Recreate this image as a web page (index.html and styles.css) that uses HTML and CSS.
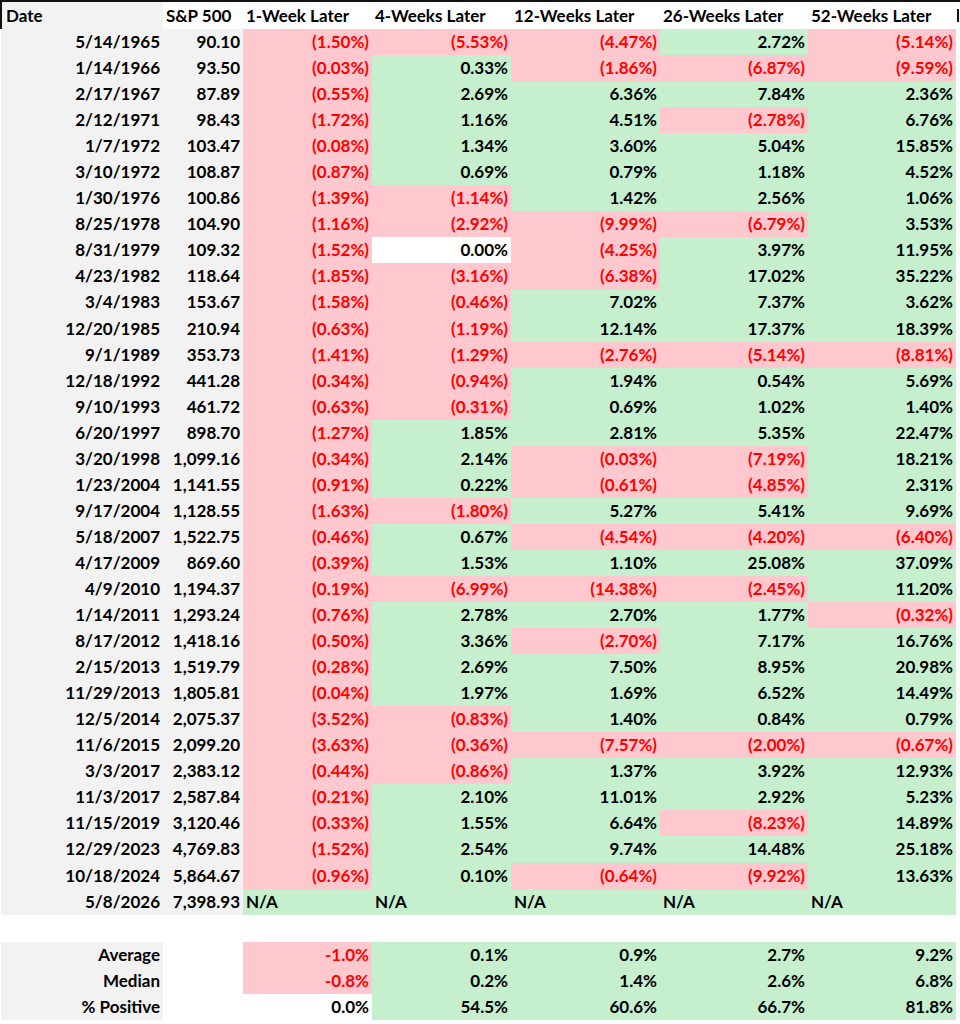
FILE: index.html
```html
<!DOCTYPE html>
<html>
<head>
<meta charset="utf-8">
<link rel="stylesheet" href="styles.css">
</head>
<body>
<table class="sheet">
<colgroup>
<col class="c-date"><col class="c-spx"><col class="c-w1"><col class="c-w4"><col class="c-w12"><col class="c-w26"><col class="c-w52"><col class="c-extra">
</colgroup>
<thead>
<tr class="head">
<th class="h-date">Date</th><th>S&amp;P 500</th><th>1-Week Later</th><th>4-Weeks Later</th><th>12-Weeks Later</th><th>26-Weeks Later</th><th>52-Weeks Later</th><th class="h-extra"><span class="stub"></span></th>
</tr>
</thead>
<tbody>
<tr><td class="lbl">5/14/1965</td><td class="lbl">90.10</td><td class="neg">(1.50%)</td><td class="neg">(5.53%)</td><td class="neg">(4.47%)</td><td class="pos">2.72%</td><td class="neg">(5.14%)</td><td></td></tr>
<tr><td class="lbl">1/14/1966</td><td class="lbl">93.50</td><td class="neg">(0.03%)</td><td class="pos">0.33%</td><td class="neg">(1.86%)</td><td class="neg">(6.87%)</td><td class="neg">(9.59%)</td><td></td></tr>
<tr><td class="lbl">2/17/1967</td><td class="lbl">87.89</td><td class="neg">(0.55%)</td><td class="pos">2.69%</td><td class="pos">6.36%</td><td class="pos">7.84%</td><td class="pos">2.36%</td><td></td></tr>
<tr><td class="lbl">2/12/1971</td><td class="lbl">98.43</td><td class="neg">(1.72%)</td><td class="pos">1.16%</td><td class="pos">4.51%</td><td class="neg">(2.78%)</td><td class="pos">6.76%</td><td></td></tr>
<tr><td class="lbl">1/7/1972</td><td class="lbl">103.47</td><td class="neg">(0.08%)</td><td class="pos">1.34%</td><td class="pos">3.60%</td><td class="pos">5.04%</td><td class="pos">15.85%</td><td></td></tr>
<tr><td class="lbl">3/10/1972</td><td class="lbl">108.87</td><td class="neg">(0.87%)</td><td class="pos">0.69%</td><td class="pos">0.79%</td><td class="pos">1.18%</td><td class="pos">4.52%</td><td></td></tr>
<tr><td class="lbl">1/30/1976</td><td class="lbl">100.86</td><td class="neg">(1.39%)</td><td class="neg">(1.14%)</td><td class="pos">1.42%</td><td class="pos">2.56%</td><td class="pos">1.06%</td><td></td></tr>
<tr><td class="lbl">8/25/1978</td><td class="lbl">104.90</td><td class="neg">(1.16%)</td><td class="neg">(2.92%)</td><td class="neg">(9.99%)</td><td class="neg">(6.79%)</td><td class="pos">3.53%</td><td></td></tr>
<tr><td class="lbl">8/31/1979</td><td class="lbl">109.32</td><td class="neg">(1.52%)</td><td class="zero">0.00%</td><td class="neg">(4.25%)</td><td class="pos">3.97%</td><td class="pos">11.95%</td><td></td></tr>
<tr><td class="lbl">4/23/1982</td><td class="lbl">118.64</td><td class="neg">(1.85%)</td><td class="neg">(3.16%)</td><td class="neg">(6.38%)</td><td class="pos">17.02%</td><td class="pos">35.22%</td><td></td></tr>
<tr><td class="lbl">3/4/1983</td><td class="lbl">153.67</td><td class="neg">(1.58%)</td><td class="neg">(0.46%)</td><td class="pos">7.02%</td><td class="pos">7.37%</td><td class="pos">3.62%</td><td></td></tr>
<tr><td class="lbl">12/20/1985</td><td class="lbl">210.94</td><td class="neg">(0.63%)</td><td class="neg">(1.19%)</td><td class="pos">12.14%</td><td class="pos">17.37%</td><td class="pos">18.39%</td><td></td></tr>
<tr><td class="lbl">9/1/1989</td><td class="lbl">353.73</td><td class="neg">(1.41%)</td><td class="neg">(1.29%)</td><td class="neg">(2.76%)</td><td class="neg">(5.14%)</td><td class="neg">(8.81%)</td><td></td></tr>
<tr><td class="lbl">12/18/1992</td><td class="lbl">441.28</td><td class="neg">(0.34%)</td><td class="neg">(0.94%)</td><td class="pos">1.94%</td><td class="pos">0.54%</td><td class="pos">5.69%</td><td></td></tr>
<tr><td class="lbl">9/10/1993</td><td class="lbl">461.72</td><td class="neg">(0.63%)</td><td class="neg">(0.31%)</td><td class="pos">0.69%</td><td class="pos">1.02%</td><td class="pos">1.40%</td><td></td></tr>
<tr><td class="lbl">6/20/1997</td><td class="lbl">898.70</td><td class="neg">(1.27%)</td><td class="pos">1.85%</td><td class="pos">2.81%</td><td class="pos">5.35%</td><td class="pos">22.47%</td><td></td></tr>
<tr><td class="lbl">3/20/1998</td><td class="lbl">1,099.16</td><td class="neg">(0.34%)</td><td class="pos">2.14%</td><td class="neg">(0.03%)</td><td class="neg">(7.19%)</td><td class="pos">18.21%</td><td></td></tr>
<tr><td class="lbl">1/23/2004</td><td class="lbl">1,141.55</td><td class="neg">(0.91%)</td><td class="pos">0.22%</td><td class="neg">(0.61%)</td><td class="neg">(4.85%)</td><td class="pos">2.31%</td><td></td></tr>
<tr><td class="lbl">9/17/2004</td><td class="lbl">1,128.55</td><td class="neg">(1.63%)</td><td class="neg">(1.80%)</td><td class="pos">5.27%</td><td class="pos">5.41%</td><td class="pos">9.69%</td><td></td></tr>
<tr><td class="lbl">5/18/2007</td><td class="lbl">1,522.75</td><td class="neg">(0.46%)</td><td class="pos">0.67%</td><td class="neg">(4.54%)</td><td class="neg">(4.20%)</td><td class="neg">(6.40%)</td><td></td></tr>
<tr><td class="lbl">4/17/2009</td><td class="lbl">869.60</td><td class="neg">(0.39%)</td><td class="pos">1.53%</td><td class="pos">1.10%</td><td class="pos">25.08%</td><td class="pos">37.09%</td><td></td></tr>
<tr><td class="lbl">4/9/2010</td><td class="lbl">1,194.37</td><td class="neg">(0.19%)</td><td class="neg">(6.99%)</td><td class="neg">(14.38%)</td><td class="neg">(2.45%)</td><td class="pos">11.20%</td><td></td></tr>
<tr><td class="lbl">1/14/2011</td><td class="lbl">1,293.24</td><td class="neg">(0.76%)</td><td class="pos">2.78%</td><td class="pos">2.70%</td><td class="pos">1.77%</td><td class="neg">(0.32%)</td><td></td></tr>
<tr><td class="lbl">8/17/2012</td><td class="lbl">1,418.16</td><td class="neg">(0.50%)</td><td class="pos">3.36%</td><td class="neg">(2.70%)</td><td class="pos">7.17%</td><td class="pos">16.76%</td><td></td></tr>
<tr><td class="lbl">2/15/2013</td><td class="lbl">1,519.79</td><td class="neg">(0.28%)</td><td class="pos">2.69%</td><td class="pos">7.50%</td><td class="pos">8.95%</td><td class="pos">20.98%</td><td></td></tr>
<tr><td class="lbl">11/29/2013</td><td class="lbl">1,805.81</td><td class="neg">(0.04%)</td><td class="pos">1.97%</td><td class="pos">1.69%</td><td class="pos">6.52%</td><td class="pos">14.49%</td><td></td></tr>
<tr><td class="lbl">12/5/2014</td><td class="lbl">2,075.37</td><td class="neg">(3.52%)</td><td class="neg">(0.83%)</td><td class="pos">1.40%</td><td class="pos">0.84%</td><td class="pos">0.79%</td><td></td></tr>
<tr><td class="lbl">11/6/2015</td><td class="lbl">2,099.20</td><td class="neg">(3.63%)</td><td class="neg">(0.36%)</td><td class="neg">(7.57%)</td><td class="neg">(2.00%)</td><td class="neg">(0.67%)</td><td></td></tr>
<tr><td class="lbl">3/3/2017</td><td class="lbl">2,383.12</td><td class="neg">(0.44%)</td><td class="neg">(0.86%)</td><td class="pos">1.37%</td><td class="pos">3.92%</td><td class="pos">12.93%</td><td></td></tr>
<tr><td class="lbl">11/3/2017</td><td class="lbl">2,587.84</td><td class="neg">(0.21%)</td><td class="pos">2.10%</td><td class="pos">11.01%</td><td class="pos">2.92%</td><td class="pos">5.23%</td><td></td></tr>
<tr><td class="lbl">11/15/2019</td><td class="lbl">3,120.46</td><td class="neg">(0.33%)</td><td class="pos">1.55%</td><td class="pos">6.64%</td><td class="neg">(8.23%)</td><td class="pos">14.89%</td><td></td></tr>
<tr><td class="lbl">12/29/2023</td><td class="lbl">4,769.83</td><td class="neg">(1.52%)</td><td class="pos">2.54%</td><td class="pos">9.74%</td><td class="pos">14.48%</td><td class="pos">25.18%</td><td></td></tr>
<tr><td class="lbl">10/18/2024</td><td class="lbl">5,864.67</td><td class="neg">(0.96%)</td><td class="pos">0.10%</td><td class="neg">(0.64%)</td><td class="neg">(9.92%)</td><td class="pos">13.63%</td><td></td></tr>
<tr><td class="lbl">5/8/2026</td><td class="lbl">7,398.93</td><td class="pos na">N/A</td><td class="pos na">N/A</td><td class="pos na">N/A</td><td class="pos na">N/A</td><td class="pos na">N/A</td><td></td></tr>
<tr class="spacer"><td colspan="8"></td></tr>
<tr><td class="lbl">Average</td><td></td><td class="neg">-1.0%</td><td class="pos">0.1%</td><td class="pos">0.9%</td><td class="pos">2.7%</td><td class="pos">9.2%</td><td></td></tr>
<tr><td class="lbl">Median</td><td></td><td class="neg">-0.8%</td><td class="pos">0.2%</td><td class="pos">1.4%</td><td class="pos">2.6%</td><td class="pos">6.8%</td><td></td></tr>
<tr><td class="lbl">% Positive</td><td></td><td class="zero">0.0%</td><td class="pos">54.5%</td><td class="pos">60.6%</td><td class="pos">66.7%</td><td class="pos">81.8%</td><td></td></tr>
</tbody>
</table>
</body>
</html>
```
FILE: styles.css
```css
html, body {
  margin: 0;
  padding: 0;
  background: #ffffff;
  overflow: hidden;
}
.sheet {
  border-collapse: collapse;
  table-layout: fixed;
  width: 960px;
  font-family: "Lato", "Liberation Sans", sans-serif;
  font-weight: 700;
  font-size: 17px;
  color: #000;
}
.c-date { width: 162px; }
.c-spx { width: 80px; }
.c-w1 { width: 129px; }
.c-w4 { width: 139px; }
.c-w12 { width: 149px; }
.c-w26 { width: 148px; }
.c-w52 { width: 148px; }
.c-extra { width: 5px; }
.sheet th, .sheet td {
  padding: 0 3px 0 3px;
  height: 26.06px;
  line-height: 26px;
  text-align: right;
  white-space: nowrap;
  overflow: hidden;
  vertical-align: middle;
}
.head th {
  height: 27px;
  line-height: 27px;
  text-align: left;
  font-weight: 700;
  border-top: 2px solid #111;
  background: #ffffff;
}
.head .h-date {
  border-left: 2px solid #111;
  background: #f2f2f2;
  padding-left: 4px;
}
.head .h-extra {
  padding: 0 0 0 1px;
  vertical-align: middle;
}
.stub {
  display: block;
  width: 2px;
  height: 13px;
  background: #111;
}
.lbl { background: #f2f2f2; }
.neg { background: #ffc7ce; color: #ff0000; }
.pos { background: #c6efce; }
.zero { background: #ffffff; }
.sheet td.na { text-align: left; }
.spacer td { height: 27px; }
```
